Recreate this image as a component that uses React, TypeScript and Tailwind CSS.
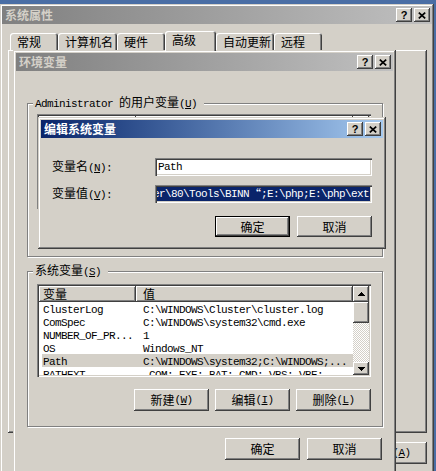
import React from 'react';

const cjk = "font-['Noto_Sans_CJK_SC',sans-serif]";
const face = 'bg-[#d4d0c8]';
const raised =
  'shadow-[inset_-1px_-1px_#404040,inset_1px_1px_#ffffff,inset_-2px_-2px_#808080,inset_2px_2px_#d4d0c8]';
const frame =
  'shadow-[inset_-1px_-1px_#404040,inset_1px_1px_#d4d0c8,inset_-2px_-2px_#808080,inset_2px_2px_#ffffff]';
const sunken =
  'shadow-[inset_1px_1px_#808080,inset_2px_2px_#404040,inset_-1px_-1px_#ffffff,inset_-2px_-2px_#d4d0c8]';
const etched = 'border border-[#808080] shadow-[inset_1px_1px_#ffffff,1px_1px_#ffffff]';

type Row = [string, string];

const Mono: React.FC<{ children: React.ReactNode }> = ({ children }) => (
  <span className="font-['Liberation_Mono',monospace] text-[11px] tracking-[-0.6px]">{children}</span>
);

// mnemonic like (N) with the letter underlined
const Key: React.FC<{ k: string }> = ({ k }) => (
  <Mono>
    (<u className="underline-offset-1">{k}</u>)
  </Mono>
);

const CapBtn: React.FC<{ children: React.ReactNode }> = ({ children }) => (
  <div className={`flex h-[14px] w-[16px] items-center justify-center ${face} ${raised}`}>{children}</div>
);

const TitleBar: React.FC<{ title: string; active?: boolean }> = ({ title, active }) => (
  <div
    className={`flex h-[18px] shrink-0 items-center justify-between bg-linear-to-r pl-[3px] pr-[2px] ${
      active ? 'from-[#0a246a] to-[#a6caf0]' : 'from-[#808080] to-[#c0c0c0]'
    }`}
  >
    <span className={`${cjk} text-[12px] leading-none font-bold ${active ? 'text-white' : 'text-[#d4d0c8]'}`}>
      {title}
    </span>
    <div className="flex items-center gap-[2px]">
      <CapBtn>
        <span className="font-['Liberation_Sans',sans-serif] text-[11px] leading-none font-bold text-black">?</span>
      </CapBtn>
      <CapBtn>
        <svg width="8" height="7" viewBox="0 0 8 7">
          <path d="M0.8 0.6L7.2 6.4M7.2 0.6L0.8 6.4" stroke="#000" strokeWidth="1.7" />
        </svg>
      </CapBtn>
    </div>
  </div>
);

const Btn: React.FC<{ children: React.ReactNode; h?: string; isDefault?: boolean }> = ({
  children,
  h = 'h-[22px]',
  isDefault,
}) => (
  <div
    className={`flex w-[75px] shrink-0 items-center justify-center ${h} ${face} ${
      isDefault ? 'border border-black' : ''
    } ${raised} ${cjk} text-[12px] leading-none text-black`}
  >
    {children}
  </div>
);

const Arrow: React.FC<{ up?: boolean }> = ({ up }) => (
  <svg width="7" height="4" viewBox="0 0 7 4" shapeRendering="crispEdges">
    {up ? <path d="M3.5 0L7 4H0z" fill="#000" /> : <path d="M0 0H7L3.5 4z" fill="#000" />}
  </svg>
);

const ScrollBar: React.FC = () => (
  <div className="flex w-[16px] shrink-0 flex-col">
    <div className={`flex h-[16px] shrink-0 items-center justify-center ${face} ${raised}`}>
      <Arrow up />
    </div>
    <div className={`h-[21px] shrink-0 ${face} ${raised}`} />
    <div className="flex-1 bg-[image:repeating-conic-gradient(#ffffff_0_25%,#d4d0c8_0_50%)] bg-[length:2px_2px]" />
    <div className={`flex h-[13px] shrink-0 items-center justify-center ${face} ${raised}`}>
      <Arrow />
    </div>
  </div>
);

const ListView: React.FC<{ rows: Row[]; h: string; selected?: number }> = ({ rows, h, selected }) => (
  <div className={`flex w-[334px] shrink-0 bg-white p-[2px] ${h} ${sunken}`}>
    <div className="flex min-w-0 flex-1 flex-col overflow-hidden">
      <div className={`flex h-[16px] shrink-0 ${cjk} text-[12px] leading-none`}>
        <div className={`flex w-[97px] items-center pl-[4px] ${face} ${raised}`}>变量</div>
        <div className={`flex flex-1 items-center pl-[7px] ${face} ${raised}`}>值</div>
      </div>
      {rows.map(([name, value], i) => (
        <div
          key={name}
          className={`ml-[3px] flex h-[13px] shrink-0 items-center whitespace-nowrap text-black ${
            i === selected ? face : ''
          }`}
        >
          <div className="w-[94px] shrink-0 pl-[1px] leading-none">
            <Mono>{name}</Mono>
          </div>
          <div className="pl-[7px] leading-none">
            <Mono>{value}</Mono>
          </div>
        </div>
      ))}
    </div>
    <ScrollBar />
  </div>
);

const systemVars: Row[] = [
  ['ClusterLog', 'C:\\WINDOWS\\Cluster\\cluster.log'],
  ['ComSpec', 'C:\\WINDOWS\\system32\\cmd.exe'],
  ['NUMBER_OF_PR...', '1'],
  ['OS', 'Windows_NT'],
  ['Path', 'C:\\WINDOWS\\system32;C:\\WINDOWS;...'],
  ['PATHEXT', '.COM;.EXE;.BAT;.CMD;.VBS;.VBE;....'],
];

const userVars: Row[] = [
  ['TEMP', 'C:\\Documents and Settings\\Admini...'],
  ['TMP', 'C:\\Documents and Settings\\Admini...'],
];

const tabs = [
  { label: '常规', w: 'w-[48px]' },
  { label: '计算机名', w: 'w-[59px]' },
  { label: '硬件', w: 'w-[48px]' },
  { label: '高级', w: 'w-[51px]', active: true },
  { label: '自动更新', w: 'w-[58px]' },
  { label: '远程', w: 'w-[48px]' },
];

export default function App() {
  return (
    <div className={`relative h-[471px] w-[436px] overflow-hidden bg-[#4a6ea5] ${cjk} text-[12px] text-black`}>
      {/* 系统属性 window */}
      <div className={`mt-[4px] flex h-[480px] w-[434px] flex-col p-[2px] ${face} ${frame}`}>
        <TitleBar title="系统属性" />
        <div className="mt-[7px] flex h-[19px] shrink-0 items-end pl-[8px]">
          {tabs.map((t) =>
            t.active ? (
              <div
                key={t.label}
                className={`relative z-10 -mb-[1px] flex h-[20px] items-center rounded-t-[3px] pb-[2px] pl-[7px] ${t.w} ${face} shadow-[inset_1px_1px_#ffffff,inset_-1px_0_#404040,inset_-2px_0_#808080]`}
              >
                {t.label}
              </div>
            ) : (
              <div
                key={t.label}
                className={`flex h-[17px] items-center rounded-t-[3px] pl-[7px] ${t.w} ${face} shadow-[inset_1px_1px_#ffffff,inset_-1px_0_#404040,inset_-2px_0_#808080]`}
              >
                {t.label}
              </div>
            ),
          )}
        </div>
        <div className={`ml-[6px] h-[383px] w-[419px] shrink-0 ${face} ${raised}`} />
        <div className="mt-[9px] flex justify-end gap-[6px] pr-[5px]">
          <Btn>确定</Btn>
          <Btn>取消</Btn>
          <Btn>
            应用<Key k="A" />
          </Btn>
        </div>
      </div>

      {/* 环境变量 dialog */}
      <div className={`absolute left-[13px] top-[50px] flex h-[440px] w-[383px] flex-col p-[3px] ${face} ${frame}`}>
        <TitleBar title="环境变量" />
        <div className="flex flex-col px-[11px]">
          <fieldset className={`mt-[24px] h-[162px] pl-[9px] pr-[11px] pt-[3px] ${etched}`}>
            <legend className={`-ml-[4px] pl-[2px] pr-[7px] leading-[14px] ${face}`}>
              <Mono>Administrator </Mono>的用户变量<Key k="U" />
            </legend>
            <ListView rows={userVars} h="h-[95px]" />
            <div className="mt-[8px] flex justify-end gap-[6px] pr-[1px]">
              <Btn>
                新建<Key k="N" />
              </Btn>
              <Btn>
                编辑<Key k="E" />
              </Btn>
              <Btn>
                删除<Key k="D" />
              </Btn>
            </div>
          </fieldset>

          <fieldset className={`mt-[6px] h-[164px] pl-[9px] pr-[11px] pt-[5px] ${etched}`}>
            <legend className={`-ml-[4px] pl-[2px] pr-[7px] leading-[14px] ${face}`}>
              系统变量<Key k="S" />
            </legend>
            <ListView rows={systemVars} h="h-[93px]" selected={4} />
            <div className="mt-[12px] flex justify-end gap-[6px] pr-[0px]">
              <Btn>
                新建<Key k="W" />
              </Btn>
              <Btn>
                编辑<Key k="I" />
              </Btn>
              <Btn>
                删除<Key k="L" />
              </Btn>
            </div>
          </fieldset>

          <div className="mt-[11px] flex justify-end gap-[7px]">
            <Btn>确定</Btn>
            <Btn>取消</Btn>
          </div>
        </div>
      </div>

      {/* 编辑系统变量 dialog */}
      <div className={`absolute left-[38px] top-[117px] flex h-[132px] w-[348px] flex-col p-[3px] ${face} ${frame}`}>
        <TitleBar title="编辑系统变量" active />
        <div className="flex flex-col px-[11px]">
          <div className="mt-[20px] flex h-[18px] items-center">
            <div className="w-[103px] shrink-0 leading-none">
              变量名<Key k="N" />
              <Mono>:</Mono>
            </div>
            <div className={`flex h-[18px] w-[217px] items-center bg-white pl-[3px] ${sunken}`}>
              <Mono>Path</Mono>
            </div>
          </div>
          <div className="mt-[9px] flex h-[18px] items-center">
            <div className="w-[103px] shrink-0 leading-none">
              变量值<Key k="V" />
              <Mono>:</Mono>
            </div>
            <div className={`flex h-[18px] w-[217px] bg-white p-[2px] ${sunken}`}>
              <div className="flex flex-1 items-center justify-end overflow-hidden whitespace-nowrap bg-[#0a246a] pr-[1px] leading-none text-white">
                <Mono>er\80\Tools\BINN</Mono>
                <span className="w-[12px] shrink-0 text-[12px]">“</span>
                <Mono>;E:\php;E:\php\ext</Mono>
              </div>
            </div>
          </div>
          <div className="mt-[13px] flex justify-end gap-[7px]">
            <Btn h="h-[21px]" isDefault>
              确定
            </Btn>
            <Btn h="h-[21px]">取消</Btn>
          </div>
        </div>
      </div>
    </div>
  );
}
